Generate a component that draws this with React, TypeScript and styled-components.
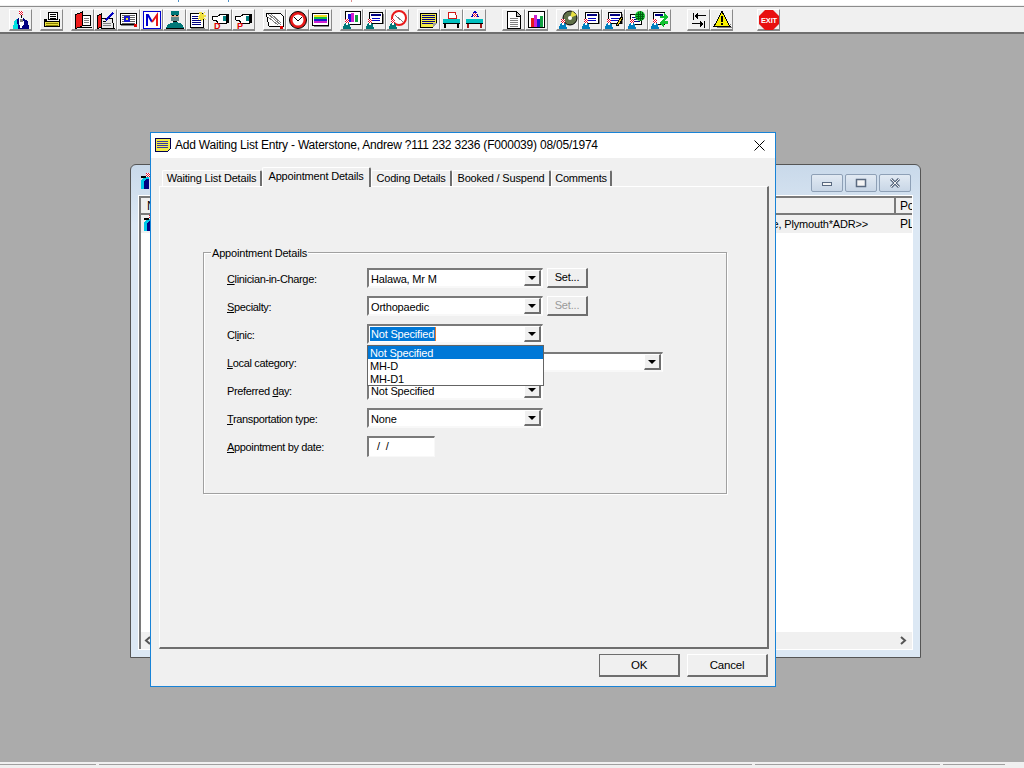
import * as React from 'react';
import { FC, ReactNode } from 'react';
import styled, { createGlobalStyle } from 'styled-components';

const GlobalStyle = createGlobalStyle`
    html, body {
        margin: 0;
        padding: 0;
        height: 100%;
        overflow: hidden;
    }
    body {
        font-family: "Liberation Sans", Arial, sans-serif;
        font-size: 11px;
        letter-spacing: -0.18px;
        color: #000000;
    }
    * { box-sizing: border-box; }
`;

const Page = styled.div`
    display: flex;
    flex-direction: column;
    width: 1024px;
    height: 768px;
    background: #ababab;
`;

const TopStrip = styled.div`
    height: 6px;
    border-bottom: 1px solid #f0f0f0;
    background:
        linear-gradient(#4a90c8, #4a90c8) 178px 0 / 1px 2px no-repeat,
        linear-gradient(#4a90c8, #4a90c8) 228px 0 / 1px 2px no-repeat,
        linear-gradient(#e09090, #e09090) 351px 0 / 1px 2px no-repeat,
        #ffffff;
`;

const Toolbar = styled.div`
    display: flex;
    height: 28px;
    padding: 2px 0 0 9px;
    background: #f0f0f0;
    border-top: 1px solid #8c8c8c;
    border-bottom: 2px solid #6e6e6e;
`;

const ToolGroup = styled.div<{ $gap: number }>`
    display: flex;
    margin-left: ${p => p.$gap}px;
`;

const ToolButton = styled.div`
    display: flex;
    align-items: center;
    justify-content: center;
    width: 23px;
    height: 22px;
    background: #f0f0f0;
    border-top: 1px solid #ffffff;
    border-left: 1px solid #ffffff;
    border-right: 1px solid #8a8a8a;
    border-bottom: 2px solid #8a8a8a;
`;

const Desktop = styled.div`
    position: relative;
    flex: 1;
`;

const StatusBar = styled.div`
    display: flex;
    gap: 3px;
    height: 6px;
    padding-top: 2px;
    background: #f0f0f0;
`;

const StatusPanel = styled.div<{ $width: number }>`
    width: ${p => p.$width}px;
    border-top: 1px solid #a0a0a0;
`;

/* the window behind the dialog */
const BackWindow = styled.div`
    position: absolute;
    left: 130px;
    top: 130px;
    width: 791px;
    height: 494px;
    display: flex;
    flex-direction: column;
    padding: 0 8px 8px;
    background: linear-gradient(#c9d9ea, #dce8f4 60px);
    border: 1px solid #555555;
    border-radius: 6px 6px 0 0;
`;

const BackTitle = styled.div`
    display: flex;
    align-items: flex-start;
    justify-content: space-between;
    height: 31px;
    padding: 8px 1px 0 1px;
`;

const WinButtons = styled.div`
    display: flex;
    gap: 2px;
    margin-top: 1px;
`;

const WinButton = styled.div`
    display: flex;
    align-items: center;
    justify-content: center;
    width: 32px;
    height: 18px;
    background: linear-gradient(#e2eaf3, #c8d6e6);
    border: 1px solid #8ea0b6;
    border-radius: 2px;
`;

const BackBody = styled.div`
    flex: 1;
    display: flex;
    flex-direction: column;
    background: #ffffff;
    border-top: 2px solid #7a7a7a;
    border-left: 2px solid #7a7a7a;
    outline: 1px solid #ffffff;
`;

const ListRow = styled.div<{ $head?: boolean }>`
    display: grid;
    grid-template-columns: 1fr 18px;
    height: ${p => (p.$head ? 17 : 18)}px;
    background: #f0f0f0;
    border-bottom: ${p => (p.$head ? '2px solid #7a7a7a' : 'none')};
    font-size: 12px;
    line-height: ${p => (p.$head ? 17 : 18)}px;
`;

const ListCell = styled.div<{ $pad?: number }>`
    overflow: hidden;
    white-space: nowrap;
    padding-left: ${p => p.$pad ?? 0}px;
`;

const RowMain = styled.div`
    display: flex;
    justify-content: space-between;
    padding: 0 26px 0 2px;
    font-size: 11px;
    overflow: hidden;
    white-space: nowrap;
`;

const HeadCell = styled(ListCell)`
    border-left: 2px solid #7a7a7a;
`;

const BackSpacer = styled.div`
    flex: 1;
`;

const ScrollBar = styled.div`
    display: flex;
    align-items: center;
    justify-content: space-between;
    height: 17px;
    padding: 0 5px 0 3px;
    background: #f0f0f0;
`;

/* the dialog */
const Dialog = styled.div`
    position: absolute;
    left: 150px;
    top: 98px;
    width: 626px;
    height: 555px;
    display: flex;
    flex-direction: column;
    background: #f0f0f0;
    border: 1px solid #1883d7;
`;

const DialogTitle = styled.div`
    display: flex;
    align-items: center;
    gap: 4px;
    height: 25px;
    padding: 0 10px 1px 4px;
    background: #ffffff;
    font-size: 12px;
    letter-spacing: -0.215px;
`;

const TitleText = styled.span`
    flex: 1;
`;

const TabStrip = styled.div`
    display: flex;
    align-items: flex-end;
    height: 29px;
    padding-left: 11px;
    margin-bottom: -1px;
`;

const Tab = styled.div<{ $active?: boolean; $width: number }>`
    position: relative;
    z-index: ${p => (p.$active ? 2 : 0)};
    width: ${p => p.$width}px;
    height: ${p => (p.$active ? 20 : 17)}px;
    padding-top: ${p => (p.$active ? 1 : 0)}px;
    background: #f0f0f0;
    border-top: 1px solid #ffffff;
    border-left: 1px solid #ffffff;
    border-right: 2px solid #6e6e6e;
    border-radius: 2px 2px 0 0;
    text-align: center;
    line-height: 15px;
`;

const TabPanel = styled.div`
    position: relative;
    z-index: 1;
    width: 610px;
    height: 463px;
    margin-left: 8px;
    padding: 65px 40px 0 43px;
    border-top: 1px solid #ffffff;
    border-left: 1px solid #ffffff;
    border-right: 2px solid #6e6e6e;
    border-bottom: 2px solid #6e6e6e;
`;

const GroupBox = styled.div`
    position: relative;
    height: 242px;
    padding: 15px 0 0 23px;
    border: 1px solid #a0a0a0;
    box-shadow: 1px 1px 0 #ffffff, inset 1px 1px 0 #ffffff;
`;

const GroupLegend = styled.span`
    position: absolute;
    left: 7px;
    top: -6px;
    padding: 0 1px;
    background: #f0f0f0;
    line-height: 12px;
`;

const FormRow = styled.div`
    position: relative;
    display: flex;
    align-items: flex-start;
    height: 28px;
`;

const FieldLabel = styled.label`
    width: 140px;
    padding-top: 1px;
    line-height: 20px;
    letter-spacing: -0.35px;
`;

const Combo = styled.div<{ $width?: number }>`
    display: flex;
    align-items: center;
    justify-content: space-between;
    width: ${p => p.$width ?? 176}px;
    height: 20px;
    padding: 0 1px;
    background: #ffffff;
    border-top: 2px solid #7a7a7a;
    border-left: 2px solid #7a7a7a;
    border-right: 1px solid #ffffff;
    border-bottom: 2px solid #f8f8f8;
`;

const ComboText = styled.span<{ $selected?: boolean }>`
    padding: 0 1px;
    line-height: 14px;
    margin: ${p => (p.$selected ? '0 0 1px' : '1px 0 0')};
    ${p => p.$selected && 'background: #0078d7; color: #ffffff; border-right: 1px solid #e8792b;'}
`;

const ComboArrow = styled.div`
    display: flex;
    align-items: center;
    justify-content: center;
    width: 17px;
    height: 16px;
    background: #f0f0f0;
    border-top: 1px solid #ffffff;
    border-left: 1px solid #ffffff;
    border-right: 2px solid #6e6e6e;
    border-bottom: 2px solid #6e6e6e;

    &::after {
        content: '';
        border-top: 4px solid #000000;
        border-left: 4px solid transparent;
        border-right: 4px solid transparent;
    }
`;

const SetButton = styled.div<{ $disabled?: boolean }>`
    width: 41px;
    height: 20px;
    margin-left: 4px;
    background: #f0f0f0;
    border-top: 1px solid #ffffff;
    border-left: 1px solid #ffffff;
    border-right: 2px solid #6e6e6e;
    border-bottom: 2px solid #6e6e6e;
    color: ${p => (p.$disabled ? '#9a9a9a' : '#000000')};
    text-align: center;
    line-height: 17px;
`;

const DateInput = styled.div`
    width: 68px;
    height: 21px;
    padding-left: 8px;
    background: #ffffff;
    border-top: 2px solid #7a7a7a;
    border-left: 2px solid #7a7a7a;
    border-right: 1px solid #f8f8f8;
    border-bottom: 1px solid #f8f8f8;
    line-height: 16px;
`;

const DropList = styled.div`
    position: absolute;
    left: 140px;
    top: 21px;
    z-index: 3;
    width: 177px;
    height: 41px;
    background: #ffffff;
    border: 1px solid #646464;
`;

const DropItem = styled.div<{ $selected?: boolean }>`
    height: 13px;
    padding-left: 2px;
    background: ${p => (p.$selected ? '#0078d7' : '#ffffff')};
    color: ${p => (p.$selected ? '#ffffff' : '#000000')};
    line-height: 15px;
`;

const DialogFooter = styled.div`
    display: flex;
    justify-content: flex-end;
    gap: 7px;
    padding: 5px 7px 0 0;
`;

const PushButton = styled.div<{ $default?: boolean }>`
    width: 81px;
    height: 23px;
    background: #f0f0f0;
    border-top: 1px solid ${p => (p.$default ? '#6e6e6e' : '#ffffff')};
    border-left: 1px solid ${p => (p.$default ? '#6e6e6e' : '#ffffff')};
    border-right: 2px solid #6e6e6e;
    border-bottom: 2px solid #6e6e6e;
    text-align: center;
    line-height: 20px;
    font-size: 11.5px;
    letter-spacing: -0.2px;
`;

/* toolbar pictures: a 20px grid, one unit is one screen pixel */
const Pic: FC<{ children: ReactNode }> = ({ children }) => (
    <svg width={20} height={20} viewBox="0 0 20 20" shapeRendering="crispEdges">{children}</svg>
);

const Box: FC<{ x: number; y: number; w: number; h: number; c: string; s?: string }> = ({ x, y, w, h, c, s }) => (
    <rect x={x} y={y} width={w} height={h} fill={c} stroke={s} />
);

const Lines: FC<{ x: number; y: number; w: number; n: number; c?: string; step?: number }> = ({ x, y, w, n, c = '#000000', step = 2 }) => (
    <>{Array.from({ length: n }, (_, i) => <Box key={i} x={x} y={y + i * step} w={w} h={1} c={c} />)}</>
);

const CheckHead: FC<{ x: number; y: number }> = ({ x, y }) => (
    <>
        <Box x={x} y={y} w={4} h={4} c="#e8102a" />
        <Box x={x + 1} y={y} w={1} h={1} c="#ffffff" />
        <Box x={x + 3} y={y} w={1} h={1} c="#ffffff" />
        <Box x={x} y={y + 1} w={1} h={1} c="#ffffff" />
        <Box x={x + 2} y={y + 1} w={1} h={1} c="#ffffff" />
        <Box x={x + 1} y={y + 2} w={1} h={1} c="#ffffff" />
        <Box x={x + 3} y={y + 2} w={1} h={1} c="#ffffff" />
        <Box x={x} y={y + 3} w={1} h={1} c="#ffffff" />
        <Box x={x + 2} y={y + 3} w={1} h={1} c="#ffffff" />
    </>
);

// small figure in the lower left of the patient icons
const Patient: FC<{ x?: number; y?: number; coat?: string }> = ({ x = 1, y = 9, coat = '#007878' }) => (
    <>
        <CheckHead x={x + 2} y={y} />
        <path d={`M${x} ${y + 10}l1-5 2-1h2l2 1 1 5z`} fill={coat} />
        <Box x={x + 3} y={y + 4} w={2} h={2} c="#ffffff" />
    </>
);

const FormSheet: FC = () => (
    <>
        <Box x={4.5} y={2.5} w={13} h={11} c="#ffffff" s="#000000" />
        <Box x={18} y={4} w={1} h={10} c="#808080" />
        <Box x={6} y={4} w={10} h={2} c="#000080" />
        <Lines x={7} y={8} w={8} n={2} c="#0000c0" />
    </>
);

const toolIcons: ReactNode[][] = [
    [
        <Pic key="doctor">
            <CheckHead x={8} y={1} />
            <path d="M2 19l1-8 5-3h4l5 3 1 8z" fill="#000080" />
            <path d="M2 19l1-8 3-2 1 10z" fill="#00e0e0" />
            <path d="M8 8h4l1 6-3 5-2-5z" fill="#ffffff" />
            <Box x={9} y={9} w={3} h={3} c="#808080" />
            <Box x={10} y={5} w={1} h={3} c="#000000" />
        </Pic>,
    ],
    [
        <Pic key="printer">
            <Box x={6.5} y={2.5} w={9} h={7} c="#ffffff" s="#000000" />
            <Lines x={8} y={4} w={6} n={3} />
            <path d="M2 9h3v2h12V9h1v8H2z" fill="#000000" />
            <path d="M3 12h14v4H3z" fill="#e8e040" />
            <Lines x={4} y={13} w={12} n={2} c="#8a8000" />
        </Pic>,
    ],
    [
        <Pic key="book">
            <path d="M2 5l7-3v14l-7 3z" fill="#ee1c1c" stroke="#000000" />
            <Box x={9.5} y={5.5} w={8} h={10} c="#ffffff" s="#000000" />
            <Lines x={11} y={8} w={5} n={3} c="#808080" />
            <Box x={4} y={17} w={15} h={1} c="#000000" />
        </Pic>,
        <Pic key="bookpen">
            <path d="M1 6l4-2v13l-4 2z" fill="#ee1c1c" stroke="#000000" />
            <path d="M5 8h11l2 10H5z" fill="#e8e8e8" stroke="#000000" />
            <path d="M9 10l7-8 2 1-7 8z" fill="#0000c0" />
            <Box x={7} y={11} w={3} h={1} c="#000000" />
            <Lines x={7} y={13} w={8} n={2} c="#808080" />
        </Pic>,
        <Pic key="eye">
            <Box x={1.5} y={3.5} w={16} h={11} c="#ffffff" s="#000000" />
            <Lines x={3} y={5} w={13} n={5} c="#606060" />
            <circle cx={8} cy={9} r={3.5} fill="#1818d0" />
            <circle cx={8} cy={9} r={1.5} fill="#f0e020" />
            <Box x={15} y={14} w={3} h={3} c="#e00000" />
            <Box x={2} y={15} w={13} h={1} c="#808080" />
        </Pic>,
        <Pic key="mail">
            <Box x={1} y={1} w={18} h={18} c="#ffffff" />
            <Box x={1} y={1} w={18} h={1} c="#0000d0" />
            <Box x={1} y={1} w={1} h={18} c="#0000d0" />
            <Box x={18} y={1} w={1} h={18} c="#0000d0" />
            <Box x={1} y={18} w={18} h={1} c="#0000d0" />
            <path d="M5 16V5h1l4 7" fill="none" stroke="#0000d0" strokeWidth="2" shapeRendering="auto" />
            <path d="M10 12l5-7v11" fill="none" stroke="#e81818" strokeWidth="2" shapeRendering="auto" />
        </Pic>,
        <Pic key="surgeon">
            <Box x={6} y={1} w={8} h={4} c="#007878" />
            <Box x={6} y={5} w={8} h={2} c="#e0b090" />
            <Box x={7} y={5} w={2} h={1} c="#000000" />
            <Box x={11} y={5} w={2} h={1} c="#000000" />
            <Box x={6} y={7} w={8} h={4} c="#608888" />
            <Box x={8} y={11} w={4} h={1} c="#000000" />
            <path d="M1 18l2-4 6-2h2l6 2 2 4z" fill="#007878" />
            <Box x={1} y={18} w={18} h={1} c="#000000" />
        </Pic>,
        <Pic key="burst">
            <Box x={2.5} y={3.5} w={13} h={14} c="#ffffff" s="#000000" />
            <Box x={3} y={18} w={14} h={1} c="#808080" />
            <Lines x={4} y={6} w={9} n={5} c="#000080" />
            <path d="M13 1l1 3 3-2-1 3 3 1-3 1 2 3-3-1-1 3-2-3-2 1 1-3-2-1 3-1-1-3 3 1z" fill="#f0e040" />
        </Pic>,
        <Pic key="handd">
            <path d="M1 6h6l3-2h5v9H7l-2-3H2z" fill="#ffffff" stroke="#000000" />
            <Box x={15} y={4} w={3} h={9} c="#000000" />
            <Box x={12} y={6} w={3} h={5} c="#008080" />
            <text x={3} y={19} fontFamily="Liberation Sans" fontSize={9} fontWeight={700} fill="#e00000">D</text>
        </Pic>,
        <Pic key="handp">
            <path d="M1 6h6l3-2h5v9H7l-2-3H2z" fill="#ffffff" stroke="#000000" />
            <Box x={15} y={4} w={3} h={9} c="#000000" />
            <Box x={12} y={6} w={3} h={5} c="#008080" />
            <text x={3} y={19} fontFamily="Liberation Sans" fontSize={9} fontWeight={700} fill="#e00000">P</text>
        </Pic>,
    ],
    [
        <Pic key="slate">
            <path d="M1 3h14l3 3v10H4z" fill="#ffffff" stroke="#000000" />
            <path d="M3 4l13 11M3 7l10 8M6 4l10 9" stroke="#808080" fill="none" />
            <Box x={15} y={16} w={3} h={3} c="#e00000" />
        </Pic>,
        <Pic key="clock">
            <circle cx={10} cy={10} r={8.5} fill="#e81818" stroke="#000000" shapeRendering="auto" />
            <circle cx={10} cy={10} r={5.5} fill="#ffffff" shapeRendering="auto" />
            <path d="M6 7l4 4 4-4" fill="none" stroke="#000000" shapeRendering="auto" />
        </Pic>,
        <Pic key="stripes">
            <Box x={1.5} y={3.5} w={16} h={12} c="#ffffff" s="#000000" />
            <Box x={3} y={5} w={13} h={2} c="#f0e020" />
            <Box x={3} y={7} w={13} h={2} c="#10c040" />
            <Box x={3} y={9} w={13} h={2} c="#1818d0" />
            <Box x={3} y={11} w={13} h={2} c="#d020d0" />
            <Box x={3} y={16} w={15} h={1} c="#808080" />
        </Pic>,
    ],
    [
        <Pic key="monitor">
            <Box x={3.5} y={1.5} w={15} h={13} c="#ffffff" s="#000000" />
            <Box x={6} y={4} w={3} h={8} c="#1818d0" />
            <Box x={9} y={3} w={3} h={9} c="#d020d0" />
            <Box x={13} y={5} w={3} h={7} c="#10a040" />
            <Patient />
        </Pic>,
        <Pic key="form">
            <FormSheet />
            <Patient />
        </Pic>,
        <Pic key="ban">
            <circle cx={11} cy={8} r={7} fill="#ffffff" stroke="#e81818" strokeWidth="2" shapeRendering="auto" />
            <path d="M7 5l8 7" stroke="#808080" />
            <Patient />
        </Pic>,
    ],
    [
        <Pic key="note">
            <path d="M1.5 3.5h16v10l-4 4h-12z" fill="#f4ec48" stroke="#000000" />
            <Lines x={3} y={5} w={13} n={5} c="#000080" />
            <path d="M18 13h-4v4z" fill="#a0a0a0" />
        </Pic>,
        <Pic key="bed">
            <path d="M6 5l1-3h6l1 3v3H6z" fill="#ffffff" stroke="#d01818" />
            <Box x={1} y={9} w={17} h={4} c="#00c0c0" />
            <Box x={1} y={13} w={17} h={1} c="#000000" />
            <Box x={2} y={14} w={2} h={4} c="#000000" />
            <Box x={15} y={14} w={2} h={4} c="#000000" />
        </Pic>,
        <Pic key="bedperson">
            <path d="M6 7l3-6h2l3 6z" fill="#0000c0" />
            <CheckHead x={8} y={3} />
            <Box x={1} y={9} w={17} h={4} c="#00c0c0" />
            <Box x={1} y={13} w={17} h={1} c="#000000" />
            <Box x={2} y={14} w={2} h={4} c="#a01818" />
            <Box x={15} y={14} w={2} h={4} c="#a01818" />
        </Pic>,
    ],
    [
        <Pic key="doc">
            <path d="M3.5 1.5h9l4 4v13h-13z" fill="#ffffff" stroke="#000000" />
            <path d="M12.5 2v4h4" fill="#c0c0c0" stroke="#000000" />
            <Lines x={6} y={8} w={8} n={5} c="#808080" />
        </Pic>,
        <Pic key="chart">
            <Box x={1.5} y={1.5} w={16} h={16} c="#ffffff" s="#000000" />
            <Box x={4} y={8} w={3} h={9} c="#e81818" />
            <Box x={7} y={5} w={3} h={12} c="#d020d0" />
            <Box x={10} y={9} w={3} h={8} c="#1818d0" />
            <Box x={13} y={6} w={3} h={11} c="#10a040" />
        </Pic>,
    ],
    [
        <Pic key="disc">
            <circle cx={12} cy={8} r={7} fill="#607048" stroke="#000000" shapeRendering="auto" />
            <path d="M12 8l2-7 5 4z" fill="#e8e040" shapeRendering="auto" />
            <circle cx={12} cy={8} r={2} fill="#ffffff" shapeRendering="auto" />
            <Patient coat="#0080c0" />
        </Pic>,
        <Pic key="form2">
            <FormSheet />
            <Patient coat="#0080c0" />
        </Pic>,
        <Pic key="formpen">
            <FormSheet />
            <path d="M12 15l5-8 2 1-5 8z" fill="#f0d020" stroke="#000000" />
            <Patient coat="#0080c0" />
        </Pic>,
        <Pic key="formglobe">
            <Box x={3.5} y={4.5} w={11} h={10} c="#ffffff" s="#000000" />
            <Lines x={5} y={7} w={8} n={3} c="#000080" />
            <circle cx={13} cy={6} r={5} fill="#10c030" shapeRendering="auto" />
            <path d="M9 4h8M9 6h8M9 8h8M11 2v8M13 1v10M15 2v8" stroke="#006010" />
            <Patient coat="#0080c0" />
        </Pic>,
        <Pic key="formarrows">
            <Box x={3.5} y={2.5} w={11} h={12} c="#ffffff" s="#000000" />
            <Box x={5} y={4} w={8} h={2} c="#000080" />
            <path d="M10 6h4V3l5 4-5 4V8h-4z" fill="#10c030" />
            <path d="M18 11h-4V9l-5 4 5 4v-3h4z" fill="#10c030" />
            <Patient coat="#0080c0" />
        </Pic>,
    ],
    [
        <Pic key="swap">
            <Box x={4} y={3} w={1} h={7} c="#000000" />
            <path d="M5 6l4-3v2h8v1H9v3z" fill="#000000" />
            <Box x={15} y={11} w={1} h={7} c="#000000" />
            <path d="M15 14l-4-3v2H3v1h8v3z" fill="#000000" />
        </Pic>,
        <Pic key="warning">
            <path d="M10 1.5l8 15H2z" fill="#f8f000" stroke="#000000" />
            <Box x={9} y={6} w={2} h={6} c="#000000" />
            <Box x={9} y={13} w={2} h={2} c="#000000" />
            <path d="M18 12l1 5H5v1h15z" fill="#808080" />
        </Pic>,
    ],
    [
        <Pic key="exit">
            <path d="M6 0h8l6 6v8l-6 6H6l-6-6V6z" fill="#e81010" shapeRendering="auto" />
            <text x={10} y={12.5} textAnchor="middle" fontFamily="Liberation Sans" fontSize={7.5} fontWeight={700} letterSpacing={-0.2} fill="#ffffff">EXIT</text>
        </Pic>,
    ],
];

const groupGaps = [0, 8, 8, 8, 8, 8, 16, 8, 16, 24];

const FigureIcon: FC = () => (
    <svg width="11" height="17" viewBox="0 0 11 17" shapeRendering="crispEdges">
        <CheckHead x={6} y={0} />
        <path d="M1 16V8l3-4h5v2H6L4 9v7z" fill="#00c8e8" />
        <path d="M4 16V9l2-3h3v10z" fill="#000080" />
        <Box x={1} y={3} w={5} h={2} c="#000000" />
    </svg>
);

const Chevron: FC<{ left?: boolean }> = ({ left }) => (
    <svg width="8" height="9" viewBox="0 0 8 9">
        <path d={left ? 'M6 1L2 4.5 6 8' : 'M2 1l4 3.5L2 8'} fill="none" stroke="#555555" strokeWidth="2" />
    </svg>
);

interface ComboFieldProps {
    label: ReactNode;
    value?: string;
    width?: number;
    selected?: boolean;
    children?: ReactNode;
}
const ComboField: FC<ComboFieldProps> = ({ label, value, width, selected, children }) => (
    <FormRow>
        <FieldLabel>{label}</FieldLabel>
        <Combo $width={width}>
            <ComboText $selected={selected}>{value}</ComboText>
            <ComboArrow />
        </Combo>
        {children}
    </FormRow>
);

const tabs = [
    { name: 'Waiting List Details', width: 100 },
    { name: 'Appointment Details', width: 109, active: true },
    { name: 'Coding Details', width: 81 },
    { name: 'Booked / Suspend', width: 99 },
    { name: 'Comments', width: 61 },
];

const App: FC = () => (
    <Page>
        <GlobalStyle />
        <TopStrip />
        <Toolbar>
            {toolIcons.map((group, i) => (
                <ToolGroup key={i} $gap={groupGaps[i]}>
                    {group.map((icon, j) => <ToolButton key={j}>{icon}</ToolButton>)}
                </ToolGroup>
            ))}
        </Toolbar>
        <Desktop>
            <BackWindow>
                <BackTitle>
                    <FigureIcon />
                    <WinButtons>
                        <WinButton><svg width="12" height="8"><rect x="1.5" y="3.5" width="9" height="3" fill="#f4f4f4" stroke="#5a6a80" /></svg></WinButton>
                        <WinButton><svg width="12" height="10"><rect x="1.5" y="1.5" width="9" height="7" fill="#f4f4f4" stroke="#5a6a80" strokeWidth="1.5" /></svg></WinButton>
                        <WinButton>
                            <svg width="12" height="10">
                                <path d="M2 1l8 8M10 1L2 9" stroke="#5a6a80" strokeWidth="3" />
                                <path d="M2 1l8 8M10 1L2 9" stroke="#f0f0f0" strokeWidth="1" />
                            </svg>
                        </WinButton>
                    </WinButtons>
                </BackTitle>
                <BackBody>
                    <ListRow $head>
                        <ListCell $pad={6}>N</ListCell>
                        <HeadCell $pad={4}>Po</HeadCell>
                    </ListRow>
                    <ListRow>
                        <RowMain>
                            <FigureIcon />
                            <span>e, Plymouth*ADR&gt;&gt;</span>
                        </RowMain>
                        <ListCell $pad={6}>PL</ListCell>
                    </ListRow>
                    <BackSpacer />
                    <ScrollBar>
                        <Chevron left />
                        <Chevron />
                    </ScrollBar>
                </BackBody>
            </BackWindow>

            <Dialog>
                <DialogTitle>
                    <svg width="16" height="16" viewBox="0 0 16 16" shapeRendering="crispEdges">
                        <path d="M0.5 1.5h15v10l-3 3h-12z" fill="#f4ec48" stroke="#000050" />
                        <Lines x={2} y={4} w={11} n={4} c="#3838a0" />
                    </svg>
                    <TitleText>Add Waiting List Entry - Waterstone, Andrew ?111 232 3236 (F000039) 08/05/1974</TitleText>
                    <svg width="11" height="11" viewBox="0 0 11 11">
                        <path d="M0.5 0.5l10 10M10.5 0.5l-10 10" stroke="#000000" />
                    </svg>
                </DialogTitle>
                <TabStrip>
                    {tabs.map(t => <Tab key={t.name} $active={t.active} $width={t.width}>{t.name}</Tab>)}
                </TabStrip>
                <TabPanel>
                    <GroupBox>
                        <GroupLegend>Appointment Details</GroupLegend>
                        <ComboField label={<><u>C</u>linician-in-Charge:</>} value="Halawa, Mr M">
                            <SetButton>Set...</SetButton>
                        </ComboField>
                        <ComboField label={<><u>S</u>pecialty:</>} value="Orthopaedic">
                            <SetButton $disabled>Set...</SetButton>
                        </ComboField>
                        <ComboField label={<>Cl<u>i</u>nic:</>} value="Not Specified" selected>
                            <DropList>
                                <DropItem $selected>Not Specified</DropItem>
                                <DropItem>MH-D</DropItem>
                                <DropItem>MH-D1</DropItem>
                            </DropList>
                        </ComboField>
                        <ComboField label={<><u>L</u>ocal category:</>} width={296} />
                        <ComboField label={<>Preferred <u>d</u>ay:</>} value="Not Specified" />
                        <ComboField label={<><u>T</u>ransportation type:</>} value="None" />
                        <FormRow>
                            <FieldLabel><u>A</u>ppointment by date:</FieldLabel>
                            <DateInput>/ &nbsp;/</DateInput>
                        </FormRow>
                    </GroupBox>
                </TabPanel>
                <DialogFooter>
                    <PushButton $default>OK</PushButton>
                    <PushButton>Cancel</PushButton>
                </DialogFooter>
            </Dialog>
        </Desktop>
        <StatusBar>
            <StatusPanel $width={96} />
            <StatusPanel $width={653} />
            <StatusPanel $width={185} />
            <StatusPanel $width={62} />
        </StatusBar>
    </Page>
);

export default App;
